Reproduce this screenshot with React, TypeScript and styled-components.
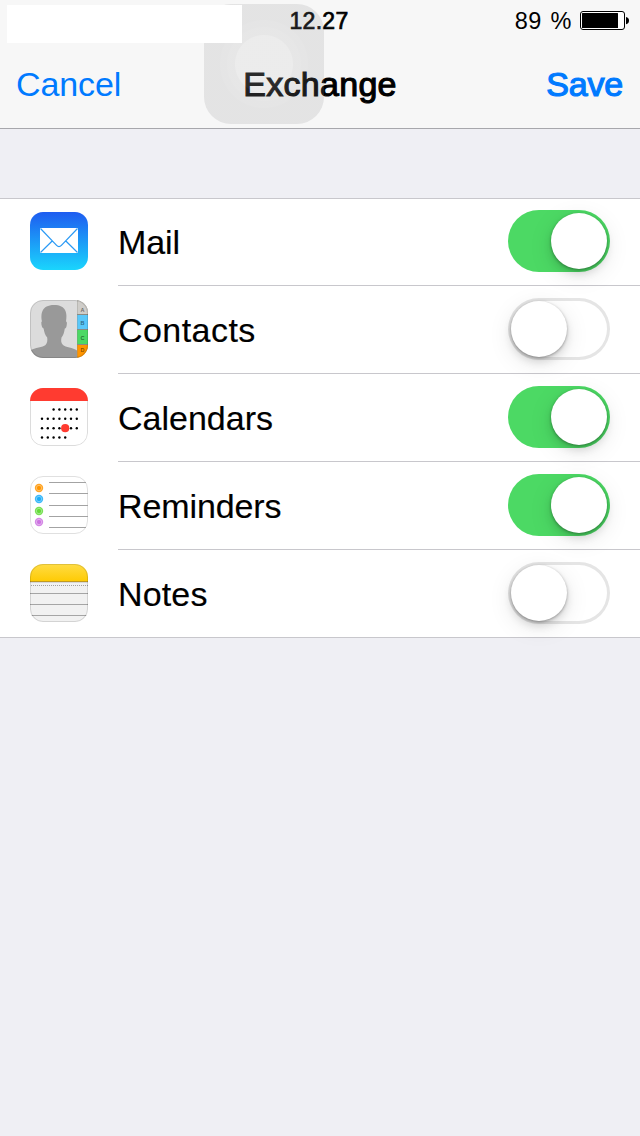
import React from 'react';
import styled, { createGlobalStyle } from 'styled-components';

const GlobalStyle = createGlobalStyle`
  * { box-sizing: border-box; }
  body {
    margin: 0;
    background: #efeff4;
    font-family: "Liberation Sans", Arial, sans-serif;
    color: #000;
  }
`;

const Screen = styled.main`
  position: relative;
  width: 640px;
  height: 1136px;
  overflow: hidden;
  background: #efeff4;
`;

const Header = styled.header`
  height: 129px;
  background: #f7f7f7;
  border-bottom: 1px solid #a7a7ac;
`;

const StatusBar = styled.div`
  display: grid;
  grid-template-columns: 1fr auto 1fr;
  height: 40px;
  padding: 1px 11px 0 9px;
  font-size: 24px;
  line-height: 40px;
  white-space: nowrap;
`;

const CarrierBox = styled.div`
  position: relative;
  z-index: 2;
  width: 235px;
  height: 38px;
  margin: 4px 0 0 -2px;
  background: #fff;
`;

const Clock = styled.span`
  font-size: 23px;
  letter-spacing: 0.3px;
  -webkit-text-stroke: 0.7px #000;
`;

const BatteryGroup = styled.div`
  display: flex;
  justify-content: flex-end;
  gap: 8px;
`;

const BatteryText = styled.span`
  font-size: 23.5px;
  letter-spacing: 0.5px;
  word-spacing: 1.8px;
`;

const BatteryIcon = styled.svg`
  display: block;
  width: 49px;
  height: 20px;
  margin-top: 10px;
`;

const NavBar = styled.nav`
  display: grid;
  grid-template-columns: 1fr auto 1fr;
  height: 88px;
  padding: 0 17px 0 16px;
  font-size: 34px;
  line-height: 88px;
`;

const NavButton = styled.button<{ $strong?: boolean }>`
  justify-self: ${p => (p.$strong ? 'end' : 'start')};
  padding: 0;
  border: 0;
  background: none;
  font: inherit;
  color: #007aff;
  letter-spacing: ${p => (p.$strong ? '-0.2px' : '-0.1px')};
  -webkit-text-stroke: ${p => (p.$strong ? '1.2px #007aff' : '0')};
`;

const Title = styled.h1`
  margin: 0;
  padding-left: 1px;
  font: inherit;
  letter-spacing: 0.3px;
  -webkit-text-stroke: 1.1px #000;
`;

const AssistiveButton = styled.div`
  position: absolute;
  z-index: 1;
  left: 204px;
  top: 4px;
  width: 120px;
  height: 120px;
  border-radius: 27px;
  background: radial-gradient(
    circle at 60px 60px,
    rgba(195, 195, 195, 0.215) 28.5px,
    rgba(165, 165, 166, 0.2) 29.5px,
    rgba(165, 165, 166, 0.2) 36.5px,
    rgba(152, 152, 154, 0.19) 37.5px,
    rgba(152, 152, 154, 0.19) 43.5px,
    rgba(139, 139, 141, 0.18) 44.5px
  );
`;

const List = styled.section`
  margin-top: 69px;
  background: #fff;
  box-shadow: inset 0 1px #c8c7cc;
`;

const Row = styled.div`
  display: flex;
  height: 88px;
  padding-left: 30px;
  &:last-child {
    height: 88px;
    box-shadow: 0 1px #c8c7cc;
  }
`;

const AppIcon = styled.svg`
  display: block;
  flex: none;
  width: 58px;
  height: 58px;
  margin: 14px 30px 0 0;
`;

const RowBody = styled.div`
  display: flex;
  flex: 1;
  justify-content: space-between;
  padding-right: 30px;
  border-bottom: 1px solid #c8c7cc;
`;

const LastRow = styled(Row)`
  &:last-child {
    border-bottom: 1px solid #c8c7cc;
    box-shadow: none;
  }
  ${RowBody} { border-bottom: 0; }
`;

const Label = styled.span<{ $spacing: number }>`
  font-size: 34px;
  line-height: 88px;
  letter-spacing: ${p => p.$spacing}px;
  -webkit-text-stroke: 0.15px #000;
`;

const Track = styled.div<{ $on: boolean }>`
  display: flex;
  justify-content: ${p => (p.$on ? 'flex-end' : 'flex-start')};
  width: 102px;
  height: 62px;
  margin-top: 12px;
  padding: 3px;
  border-radius: 31px;
  background: ${p => (p.$on ? '#4cd964' : '#fff')};
  box-shadow: ${p => (p.$on ? 'none' : 'inset 0 0 0 3px #e5e5e5')};
`;

const Knob = styled.div`
  width: 56px;
  height: 56px;
  border-radius: 50%;
  background: #fff;
  box-shadow: 0 1px 3px rgba(0, 0, 0, 0.32), 0 5px 8px rgba(0, 0, 0, 0.12), 0 6px 24px rgba(0, 0, 0, 0.1);
`;

const IconShape = ({ id }: { id: string }) => (
  <clipPath id={id}>
    <rect width="58" height="58" rx="13" />
  </clipPath>
);

const MailIcon = () => (
  <AppIcon viewBox="0 0 58 58">
    <defs>
      <linearGradient id="mailSky" x1="0" y1="0" x2="0" y2="1">
        <stop offset="0" stopColor="#1e5cf0" />
        <stop offset="1" stopColor="#1ad5fd" />
      </linearGradient>
    </defs>
    <rect width="58" height="58" rx="13" fill="url(#mailSky)" />
    <rect x="10" y="16" width="38" height="25" fill="#fff" />
    <path d="M10.5 16.5 26.6 33.4Q29 36 31.4 33.4L47.5 16.5M10.5 40.5 22.4 28.8M47.5 40.5 35.6 28.8" fill="none" stroke="#2b9af5" strokeWidth="1.2" />
  </AppIcon>
);

const contactTabs = [
  { letter: 'A', y: 0, h: 14, fill: '#cfcdc9', base: 11.5 },
  { letter: 'B', y: 15, h: 14, fill: '#5ac8fa', base: 24.5 },
  { letter: 'C', y: 30, h: 14, fill: '#4cd964', base: 39.5 },
  { letter: 'D', y: 45, h: 13, fill: '#ff9500', base: 51.5 },
];

const ContactsIcon = () => (
  <AppIcon viewBox="0 0 58 58">
    <IconShape id="contactsShape" />
    <g clipPath="url(#contactsShape)">
      <rect width="58" height="58" fill="#dcdcdc" />
      <path d="M0 58V50.500C5 47.500 13 47.500 15.500 45C17.500 43 17.500 40 17.200 37.500C15.200 35.500 14.300 32.500 13.600 28.500C12 28 11.300 25 11.300 22.500C11.500 21 12 21.500 12 21.500C10.500 14 11.500 5 24 5C36 5 37.500 13 36 21.500C37 21.500 37 23 36.800 24.500C36.500 27 36 28.500 34.800 28.500C34.200 32.500 33.300 35.500 31.500 37.500C31 40 30.800 43 33 45C35.500 47.500 43 47.500 47 50.500V58Z" fill="#999" />
      <rect x="47" width="11" height="58" fill="#8b8b83" />
      {contactTabs.map(t => (
        <g key={t.letter}>
          <rect x="47.300" y={t.y} width="11" height={t.h} fill={t.fill} />
          <text x="52.500" y={t.base} fontSize="5.500" fontWeight="bold" textAnchor="middle" fill="#000" fillOpacity="0.5">{t.letter}</text>
        </g>
      ))}
    </g>
    <rect x="0.500" y="0.500" width="57" height="57" rx="12.500" fill="none" stroke="#000" strokeOpacity="0.12" />
  </AppIcon>
);

const dotRows = [
  { y: 21.5, from: 2, to: 6 },
  { y: 30.8, from: 0, to: 6 },
  { y: 40.2, from: 0, to: 6 },
  { y: 49.5, from: 0, to: 4 },
];

const CalendarIcon = () => (
  <AppIcon viewBox="0 0 58 58">
    <IconShape id="calendarShape" />
    <g clipPath="url(#calendarShape)">
      <rect width="58" height="58" fill="#fff" />
      <rect x="0.500" y="0.500" width="57" height="57" rx="12.500" fill="none" stroke="#dcdcdc" />
      <rect width="58" height="13" fill="#ff3b30" />
    </g>
    {dotRows.map(r =>
      Array.from({ length: r.to - r.from + 1 }, (_, i) => (
        <circle key={`${r.y}-${i}`} cx={12 + (r.from + i) * 5.8} cy={r.y} r="1.200" />
      )),
    )}
    <circle cx="35.200" cy="40.200" r="4.100" fill="#ff3b30" />
  </AppIcon>
);

const bullets = [
  { y: 12, fill: '#ff9500' },
  { y: 23, fill: '#1badf8' },
  { y: 35, fill: '#63da38' },
  { y: 46, fill: '#cc73e1' },
];

const RemindersIcon = () => (
  <AppIcon viewBox="0 0 58 58">
    <rect x="0.500" y="0.500" width="57" height="57" rx="12.500" fill="#fff" stroke="#e0e0e0" />
    {bullets.map(b => (
      <g key={b.y} fill={b.fill}>
        <circle cx="9" cy={b.y} r="4.200" fillOpacity="0.850" />
        <circle cx="9" cy={b.y} r="2.600" fill="none" stroke="#fff" strokeOpacity="0.450" strokeWidth="0.700" />
        <circle cx="9" cy={b.y} r="2" />
      </g>
    ))}
    <path d="M19 6.500H56M19 17.500H58M19 29.500H58M19 40.500H58M19 51.500H56" stroke="#a3a3a3" />
  </AppIcon>
);

const NotesIcon = () => (
  <AppIcon viewBox="0 0 58 58">
    <defs>
      <linearGradient id="notesTop" x1="0" y1="0" x2="0" y2="1">
        <stop offset="0" stopColor="#ffdc45" />
        <stop offset="1" stopColor="#fecb05" />
      </linearGradient>
    </defs>
    <IconShape id="notesShape" />
    <g clipPath="url(#notesShape)">
      <rect width="58" height="58" fill="#f1f1f1" />
      <rect width="58" height="17" fill="url(#notesTop)" />
      <rect y="17" width="58" height="1" fill="#c19a20" />
      <rect y="18" width="58" height="1" fill="#d7d7d7" />
      <path d="M1 21.500H58" stroke="#a0a0a0" strokeDasharray="1 1" />
      <path d="M0 29.500H58M0 40.500H58M0 51.500H58" stroke="#a5a5a5" />
    </g>
    <rect x="0.500" y="0.500" width="57" height="57" rx="12.500" fill="none" stroke="#000" strokeOpacity="0.120" />
  </AppIcon>
);

const services = [
  { name: 'Mail', Icon: MailIcon, on: true, spacing: -0.1 },
  { name: 'Contacts', Icon: ContactsIcon, on: false, spacing: 0.45 },
  { name: 'Calendars', Icon: CalendarIcon, on: true, spacing: 0 },
  { name: 'Reminders', Icon: RemindersIcon, on: true, spacing: -0.1 },
  { name: 'Notes', Icon: NotesIcon, on: false, spacing: 0.15 },
];

export default function App() {
  return (
    <Screen>
      <GlobalStyle />
      <Header>
        <StatusBar>
          <CarrierBox />
          <Clock>12.27</Clock>
          <BatteryGroup>
            <BatteryText>89 %</BatteryText>
            <BatteryIcon viewBox="0 0 49 20">
              <rect x="0.500" y="0.500" width="44" height="18" rx="2.500" fill="#fff" stroke="#000" />
              <rect x="2" y="2" width="36" height="15" rx="0.500" />
              <path d="M46 6Q49 6.500 49 9.600Q49 12.800 46 13.300Z" />
            </BatteryIcon>
          </BatteryGroup>
        </StatusBar>
        <NavBar>
          <NavButton>Cancel</NavButton>
          <Title>Exchange</Title>
          <NavButton $strong>Save</NavButton>
        </NavBar>
      </Header>
      <List>
        {services.map(({ name, Icon, on, spacing }, i) => {
          const Item = i === services.length - 1 ? LastRow : Row;
          return (
            <Item key={name}>
              <Icon />
              <RowBody>
                <Label $spacing={spacing}>{name}</Label>
                <Track $on={on} role="switch" aria-checked={on} aria-label={name}>
                  <Knob />
                </Track>
              </RowBody>
            </Item>
          );
        })}
      </List>
      <AssistiveButton />
    </Screen>
  );
}
